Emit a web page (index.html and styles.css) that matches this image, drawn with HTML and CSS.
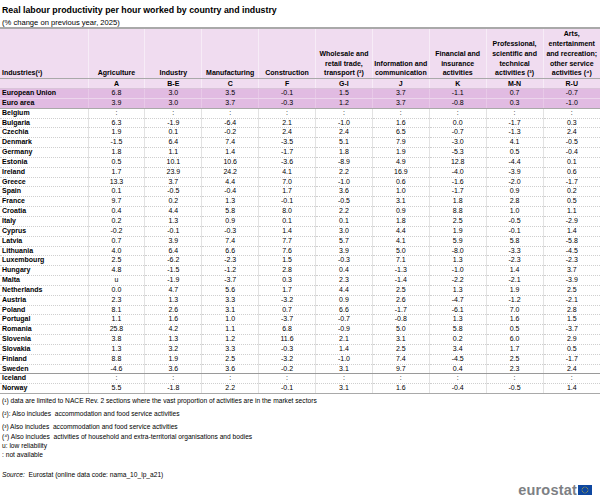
FILE: index.html
```html
<!DOCTYPE html>
<html>
<head>
<meta charset="utf-8">
<link rel="stylesheet" href="styles.css">
</head>
<body>
<div class="title">Real labour productivity per hour worked by country and industry</div>
<div class="subtitle">(% change on previous year, 2025)</div>
<table class="data">
<colgroup><col class="c0"><col><col><col><col><col><col><col><col><col></colgroup>
<thead>
<tr class="hlabels">
<th class="first">Industries(¹)</th><th>Agriculture</th><th>Industry</th><th>Manufacturing</th><th>Construction</th><th>Wholesale and retail trade, transport (²)</th><th>Information and communication</th><th>Financial and insurance activities</th><th>Professional, scientific and technical activities (³)</th><th>Arts, entertainment and recreation; other service activities (⁴)</th>
</tr>
<tr class="hcodes">
<th class="first"></th><th>A</th><th>B-E</th><th>C</th><th>F</th><th>G-I</th><th>J</th><th>K</th><th>M-N</th><th>R-U</th>
</tr>
</thead>
<tbody>
<tr class="agg"><th>European Union</th><td>6.8</td><td>3.0</td><td>3.5</td><td>-0.1</td><td>1.5</td><td>3.7</td><td>-1.1</td><td>0.7</td><td>-0.7</td></tr>
<tr class="agg last"><th>Euro area</th><td>3.9</td><td>3.0</td><td>3.7</td><td>-0.3</td><td>1.2</td><td>3.7</td><td>-0.8</td><td>0.3</td><td>-1.0</td></tr>
<tr><th>Belgium</th><td>:</td><td>:</td><td>:</td><td>:</td><td>:</td><td>:</td><td>:</td><td>:</td><td>:</td></tr>
<tr><th>Bulgaria</th><td>6.3</td><td>-1.9</td><td>-6.4</td><td>2.1</td><td>-1.0</td><td>1.6</td><td>0.0</td><td>-1.7</td><td>0.3</td></tr>
<tr><th>Czechia</th><td>1.9</td><td>0.1</td><td>-0.2</td><td>2.4</td><td>2.4</td><td>6.5</td><td>-0.7</td><td>-1.3</td><td>2.4</td></tr>
<tr><th>Denmark</th><td>-1.5</td><td>6.4</td><td>7.4</td><td>-3.5</td><td>5.1</td><td>7.9</td><td>-3.0</td><td>4.1</td><td>-0.5</td></tr>
<tr><th>Germany</th><td>1.8</td><td>1.1</td><td>1.4</td><td>-1.7</td><td>1.8</td><td>1.9</td><td>-5.3</td><td>0.5</td><td>-0.4</td></tr>
<tr><th>Estonia</th><td>0.5</td><td>10.1</td><td>10.6</td><td>-3.6</td><td>-8.9</td><td>4.9</td><td>12.8</td><td>-4.4</td><td>0.1</td></tr>
<tr><th>Ireland</th><td>1.7</td><td>23.9</td><td>24.2</td><td>4.1</td><td>2.2</td><td>16.9</td><td>-4.0</td><td>-3.9</td><td>0.6</td></tr>
<tr><th>Greece</th><td>13.3</td><td>3.7</td><td>4.4</td><td>7.0</td><td>-1.0</td><td>0.6</td><td>-1.6</td><td>-2.0</td><td>-1.7</td></tr>
<tr><th>Spain</th><td>0.1</td><td>-0.5</td><td>-0.4</td><td>1.7</td><td>3.6</td><td>1.0</td><td>-1.7</td><td>0.9</td><td>0.2</td></tr>
<tr><th>France</th><td>9.7</td><td>0.2</td><td>1.3</td><td>-0.1</td><td>-0.5</td><td>3.1</td><td>1.8</td><td>2.8</td><td>0.5</td></tr>
<tr><th>Croatia</th><td>0.4</td><td>4.4</td><td>5.8</td><td>8.0</td><td>2.2</td><td>0.9</td><td>8.8</td><td>1.0</td><td>1.1</td></tr>
<tr><th>Italy</th><td>0.2</td><td>1.3</td><td>0.9</td><td>0.1</td><td>0.1</td><td>1.8</td><td>2.5</td><td>-0.5</td><td>-2.9</td></tr>
<tr><th>Cyprus</th><td>-0.2</td><td>-0.1</td><td>-0.3</td><td>1.4</td><td>3.0</td><td>4.4</td><td>1.9</td><td>-0.1</td><td>1.4</td></tr>
<tr><th>Latvia</th><td>0.7</td><td>3.9</td><td>7.4</td><td>7.7</td><td>5.7</td><td>4.1</td><td>5.9</td><td>5.8</td><td>-5.8</td></tr>
<tr><th>Lithuania</th><td>4.0</td><td>6.4</td><td>6.6</td><td>7.6</td><td>3.9</td><td>5.0</td><td>-8.0</td><td>-3.3</td><td>-4.5</td></tr>
<tr><th>Luxembourg</th><td>2.5</td><td>-6.2</td><td>-2.3</td><td>1.5</td><td>-0.3</td><td>7.1</td><td>1.3</td><td>-2.3</td><td>-2.3</td></tr>
<tr><th>Hungary</th><td>4.8</td><td>-1.5</td><td>-1.2</td><td>2.8</td><td>0.4</td><td>-1.3</td><td>-1.0</td><td>1.4</td><td>3.7</td></tr>
<tr><th>Malta</th><td>u</td><td>-1.9</td><td>-3.7</td><td>0.3</td><td>2.3</td><td>-1.4</td><td>-2.2</td><td>-2.1</td><td>-3.9</td></tr>
<tr><th>Netherlands</th><td>0.0</td><td>4.7</td><td>5.6</td><td>1.7</td><td>4.4</td><td>2.5</td><td>1.3</td><td>1.9</td><td>2.5</td></tr>
<tr><th>Austria</th><td>2.3</td><td>1.3</td><td>3.3</td><td>-3.2</td><td>0.9</td><td>2.6</td><td>-4.7</td><td>-1.2</td><td>-2.1</td></tr>
<tr><th>Poland</th><td>8.1</td><td>2.6</td><td>3.1</td><td>0.7</td><td>6.6</td><td>-1.7</td><td>-6.1</td><td>7.0</td><td>2.8</td></tr>
<tr><th>Portugal</th><td>1.1</td><td>1.6</td><td>1.0</td><td>-3.7</td><td>-0.7</td><td>-0.8</td><td>1.3</td><td>1.6</td><td>1.5</td></tr>
<tr><th>Romania</th><td>25.8</td><td>4.2</td><td>1.1</td><td>6.8</td><td>-0.9</td><td>5.0</td><td>5.8</td><td>0.5</td><td>-3.7</td></tr>
<tr><th>Slovenia</th><td>3.8</td><td>1.3</td><td>1.2</td><td>11.6</td><td>2.1</td><td>3.1</td><td>0.2</td><td>6.0</td><td>2.9</td></tr>
<tr><th>Slovakia</th><td>1.3</td><td>3.2</td><td>3.3</td><td>-0.3</td><td>1.4</td><td>2.5</td><td>3.4</td><td>1.7</td><td>0.5</td></tr>
<tr><th>Finland</th><td>8.8</td><td>1.9</td><td>2.5</td><td>-3.2</td><td>-1.0</td><td>7.4</td><td>-4.5</td><td>2.5</td><td>-1.7</td></tr>
<tr class="eulast"><th>Sweden</th><td>-4.6</td><td>3.6</td><td>3.6</td><td>-0.2</td><td>3.1</td><td>9.7</td><td>0.4</td><td>2.3</td><td>2.4</td></tr>
<tr><th>Iceland</th><td>:</td><td>:</td><td>:</td><td>:</td><td>:</td><td>:</td><td>:</td><td>:</td><td>:</td></tr>
<tr class="final"><th>Norway</th><td>5.5</td><td>-1.8</td><td>2.2</td><td>-0.1</td><td>3.1</td><td>1.6</td><td>-0.4</td><td>-0.5</td><td>1.4</td></tr>
</tbody>
</table>
<div class="notes">
<p class="n1">(¹) data are limited to NACE Rev. 2 sections where the vast proportion of activities are in the market sectors</p>
<p class="n2">(²): Also includes&nbsp; accommodation and food service activities</p>
<p class="n3">(³) Also includes&nbsp; accommodation and food service activities</p>
<p class="n4">(⁴) Also includes&nbsp; activities of household and extra-territorial organisations and bodies</p>
<p class="n5">u: low reliability</p>
<p class="n6">: not available</p>
<p class="src"><span class="it">Source:</span>&nbsp; Eurostat (online data code: nama_10_lp_a21)</p>
</div>
<div class="logo">
<span class="logo-text">eurostat</span>
<svg class="flag" width="14" height="10" viewBox="0 0 14 10">
<rect width="14" height="10" fill="#0e47a1"/>
<g fill="#ffd617">
<circle cx="7" cy="2" r="0.45"/><circle cx="8.5" cy="2.4" r="0.45"/><circle cx="9.6" cy="3.5" r="0.45"/><circle cx="10" cy="5" r="0.45"/><circle cx="9.6" cy="6.5" r="0.45"/><circle cx="8.5" cy="7.6" r="0.45"/><circle cx="7" cy="8" r="0.45"/><circle cx="5.5" cy="7.6" r="0.45"/><circle cx="4.4" cy="6.5" r="0.45"/><circle cx="4" cy="5" r="0.45"/><circle cx="4.4" cy="3.5" r="0.45"/><circle cx="5.5" cy="2.4" r="0.45"/>
</g>
</svg>
</div>
</body>
</html>
```
FILE: styles.css
```css
html, body {
  margin: 0;
  padding: 0;
  background: #ffffff;
}
body {
  width: 600px;
  height: 498px;
  overflow: hidden;
  font-family: "Liberation Sans", Arial, sans-serif;
  color: #000000;
}
.title {
  font-weight: bold;
  font-size: 8.8px;
  line-height: 10px;
  padding: 5px 0 0 2px;
}
.subtitle {
  font-size: 7.6px;
  line-height: 9px;
  padding: 3px 0 0 2px;
}
.data {
  width: 600px;
  border-collapse: collapse;
  table-layout: fixed;
  font-size: 7px;
  margin-top: 0;
}
.data col.c0 {
  width: 88px;
}
.data th, .data td {
  padding: 0;
  text-align: center;
  white-space: nowrap;
  overflow: visible;
}
.data thead th {
  background: #f0dcf0;
  font-weight: bold;
  line-height: 9.7px;
  border-left: 1px solid #f7ecf7;
}
.data thead th.first {
  text-align: left;
  padding-left: 2px;
  border-left: none;
}
.data thead tr.hlabels th {
  height: 49px;
  vertical-align: bottom;
  white-space: normal;
  border-top: 2px solid #a9a9a9;
  border-bottom: 1px solid #a9a9a9;
  padding-bottom: 0;
}
.data thead tr.hlabels th.first {
  white-space: nowrap;
}
.data thead tr.hcodes th {
  height: 9px;
  line-height: 9px;
  border-bottom: 1px solid #d9c4d9;
}
.data tbody th {
  text-align: left;
  font-weight: bold;
  padding-left: 2px;
}
.data tbody th, .data tbody td {
  line-height: 8.85px;
  height: 8.85px;
  border-bottom: 1px dotted #cfcfcf;
}
.data tbody td {
  border-left: 1px solid #e2e2e2;
}
.data tbody tr.agg th, .data tbody tr.agg td {
  background: #e1bbe2;
  border-bottom: 1px solid #ecd6ec;
}
.data tbody tr.agg td {
  border-left-color: #e8c9e8;
}
.data tbody tr.agg.last th, .data tbody tr.agg.last td {
  border-bottom: 1px solid #a9a9a9;
}
.data tbody tr.eulast th, .data tbody tr.eulast td {
  border-bottom: 1px solid #9a9a9a;
}
.data tbody tr.final th, .data tbody tr.final td {
  border-bottom: 1px solid #a9a9a9;
}
.notes {
  font-size: 6.65px;
  line-height: 8px;
  padding-left: 2px;
}
.notes p {
  margin: 0;
}
.notes .n1 { margin-top: 3px; }
.notes .n2 { margin-top: 5px; }
.notes .n3 { margin-top: 4.5px; }
.notes .n4 { margin-top: 2px; }
.notes .n5 { margin-top: 1.5px; }
.notes .n6 { margin-top: 1px; }
.notes .src { margin-top: 12px; }
.notes .it { font-style: italic; }
.logo {
  display: flex;
  justify-content: flex-end;
  align-items: center;
  gap: 1px;
  padding-right: 8px;
  margin-top: 5px;
}
.logo-text {
  font-size: 14.5px;
  line-height: 12px;
  font-weight: bold;
  color: #7d8084;
  letter-spacing: 0.2px;
}
.flag {
  display: block;
}
```
